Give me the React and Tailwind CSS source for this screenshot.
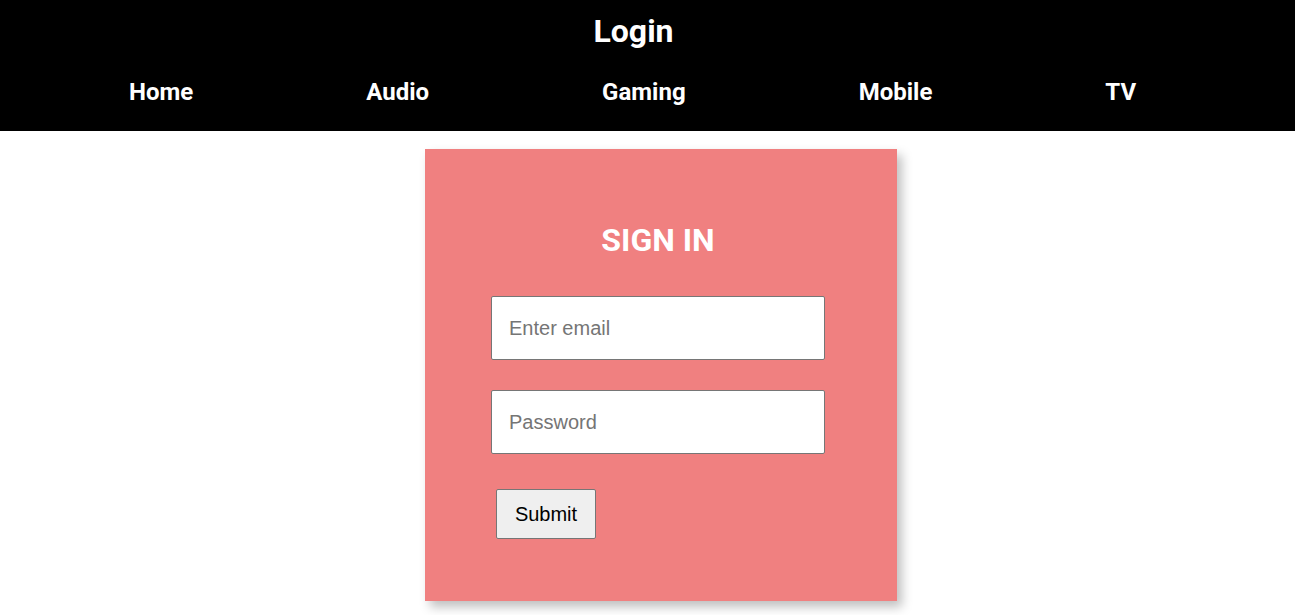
import React from 'react';

const links = ['Home', 'Audio', 'Gaming', 'Mobile', 'TV'];

export default function App() {
  return (
    <div className="min-h-[615px] bg-white font-['Roboto',sans-serif]">
      {/* Header */}
      <header className="h-[131px] bg-black text-white">
        <h1 className="pt-[13px] pr-[28px] text-center text-[32px] font-bold leading-[37px]">Login</h1>
        <nav className="mt-[28px] flex gap-[173px] pl-[129px]">
          {links.map((l) => (
            <a key={l} className="text-[24px] font-bold leading-[28px]">{l}</a>
          ))}
        </nav>
      </header>

      {/* Sign in card */}
      <div className="mt-[18px] flex justify-center pl-[27px]">
        <form className="flex h-[452px] w-[472px] flex-col bg-[#f08080] pl-[66px] pt-[73px] shadow-[5px_6px_10px_rgba(0,0,0,0.25)]">
          <h2 className="w-[334px] text-center text-[32px] font-bold leading-[37px] text-white">SIGN IN</h2>
          <input
            type="email"
            placeholder="Enter email"
            className="mt-[37px] h-[64px] w-[334px] rounded-[2px] border border-[#767676] bg-white px-[17px] font-['Liberation_Sans',Arial,sans-serif] text-[20px] placeholder:text-[#757575] outline-none"
          />
          <input
            type="password"
            placeholder="Password"
            className="mt-[30px] h-[64px] w-[334px] rounded-[2px] border border-[#767676] bg-white px-[17px] font-['Liberation_Sans',Arial,sans-serif] text-[20px] placeholder:text-[#757575] outline-none"
          />
          <button
            type="button"
            className="ml-[5px] mt-[35px] h-[50px] w-[100px] rounded-[2px] border border-[#767676] bg-[#efefef] font-['Liberation_Sans',Arial,sans-serif] text-[20px] text-black"
          >
            Submit
          </button>
        </form>
      </div>
    </div>
  );
}
